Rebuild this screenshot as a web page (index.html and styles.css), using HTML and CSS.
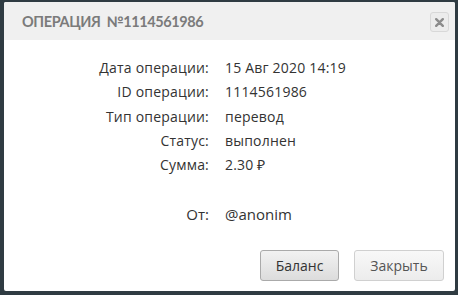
FILE: index.html
```html
<!DOCTYPE html>
<html lang="ru">
<head>
  <meta charset="UTF-8" />
  <title>Операция</title>
  <link rel="stylesheet" href="styles.css">
</head>
<body>
  <div class="dialog">
    <div class="dialog-head">
      <div class="dialog-title">Операция №1114561986</div>
      <button class="close">
        <svg width="9" height="9" viewBox="0 0 9 9"><path d="M1.2 1.2 L7.8 7.8 M7.8 1.2 L1.2 7.8" stroke="#8c8c8c" stroke-width="2.4" stroke-linecap="round"/></svg>
      </button>
    </div>
    <div class="dialog-body">
      <div class="info">
        <div class="label">Дата операции:</div><div class="value">15 Авг 2020 14:19</div>
        <div class="label">ID операции:</div><div class="value">1114561986</div>
        <div class="label">Тип операции:</div><div class="value">перевод</div>
        <div class="label">Статус:</div><div class="value">выполнен</div>
        <div class="label">Сумма:</div><div class="value">2.30 &#8381;</div>
        <div class="spacer"></div>
        <div class="label from">От:</div><div class="value from">@anonim</div>
      </div>
      <div class="buttons">
        <button class="btn active">Баланс</button>
        <button class="btn">Закрыть</button>
      </div>
    </div>
  </div>
</body>
</html>
```

FILE: styles.css
```css
body {
  margin: 0;
  padding: 2px 3px 3px 4px;
  background: #2f3b42;
  font-family: 'Open Sans', sans-serif;
}
.dialog {
  width: 451px;
  height: 289px;
  background: #fff;
  border-radius: 2px;
  display: flex;
  flex-direction: column;
}
.dialog-head {
  height: 38px;
  background: #f0f0f0;
  display: flex;
  align-items: center;
  justify-content: space-between;
  padding: 0 6px 0 18px;
  border-radius: 2px 2px 0 0;
}
.dialog-title {
  font-family: 'Lato', sans-serif;
  text-transform: uppercase;
  font-size: 14.5px;
  font-weight: bold;
  color: #7b7b7b;
  letter-spacing: -0.4px;
  word-spacing: 3px;
  padding-top: 1px;
}
.close {
  width: 19px;
  height: 20px;
  margin-top: 2px;
  padding: 0;
  border: 1px solid #d8d8d8;
  border-radius: 3px;
  background: #ececec;
  display: flex;
  align-items: center;
  justify-content: center;
}
.dialog-body {
  flex: 1;
  display: flex;
  flex-direction: column;
  padding-top: 16px;
}
.info {
  display: grid;
  grid-template-columns: 205px 1fr;
  column-gap: 16px;
  font-size: 14px;
  color: #333;
}
.label {
  text-align: right;
  line-height: 24.3px;
  letter-spacing: 0.2px;
}
.value {
  line-height: 24.3px;
  letter-spacing: 0.2px;
}
.spacer {
  grid-column: span 2;
  height: 25px;
}
.from {
  font-size: 15px;
  letter-spacing: 0;
}
.buttons {
  display: flex;
  justify-content: flex-end;
  gap: 15px;
  padding: 23px 11px 0 0;
}
.btn {
  width: 90px;
  height: 31px;
  padding: 0;
  font-family: 'Open Sans', sans-serif;
  font-size: 14px;
  color: #555;
  border: 1px solid #d0d0d0;
  border-radius: 3px;
  background: linear-gradient(#f8f8f8, #ececec);
}
.btn.active {
  width: 79px;
  color: #333;
  border-color: #aaa;
  background: linear-gradient(#f2f2f2, #dcdcdc);
}
```
